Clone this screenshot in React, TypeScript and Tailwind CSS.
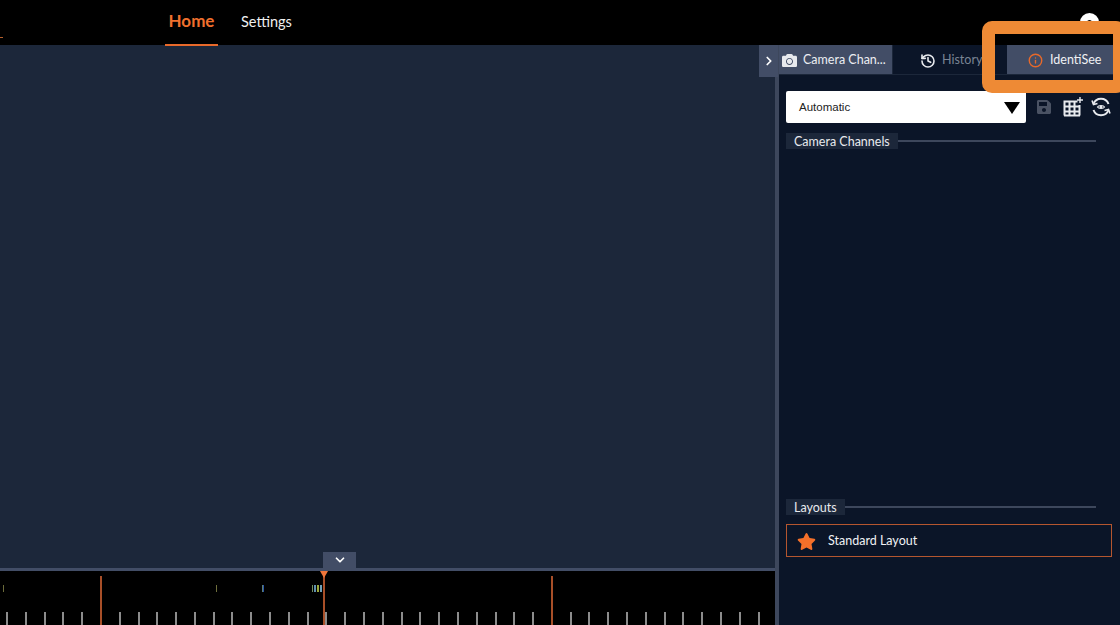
import { ChevronDown, ChevronRight, History, Info } from "lucide-react";
import { FaCamera, FaSave, FaStar } from "react-icons/fa";

const ticks = Array.from({ length: 41 }, (_, i) => 6 + i * 18.79);

const marks = [
  { x: 3, w: 1, color: "#6b6b3a" },
  { x: 216, w: 1, color: "#6f6f3c" },
  { x: 262, w: 1, color: "#5f7f6f" },
  { x: 263, w: 1, color: "#2a55a8" },
  { x: 312, w: 1, color: "#6f8f5f" },
  { x: 314, w: 2, color: "#5f8fb0" },
  { x: 317, w: 2, color: "#9aa83c" },
  { x: 320, w: 2, color: "#6fa0b8" },
];

function SectionTitle({ title, width }: { title: string; width: string }) {
  return (
    <div className="flex items-center pr-[24px]">
      <div className={`${width} h-[16px] bg-[#1c273a] pl-[8px] text-[12.5px] leading-[18px] text-[#e8eaee] whitespace-nowrap`}>{title}</div>
      <div className="h-[2px] flex-1 bg-[#3d475c]" />
    </div>
  );
}

function Timeline() {
  return (
    <div className="relative h-[54px] overflow-hidden bg-black">
      {marks.map((m) => (
        <div key={m.x} className="absolute top-[14px] h-[7px]" style={{ left: m.x, width: m.w, backgroundColor: m.color }} />
      ))}
      {ticks.map((x, i) =>
        i === 5 || i === 29 ? (
          <div key={x} className="absolute top-[5px] bottom-0 w-[2px] bg-[#a84f28]" style={{ left: x }} />
        ) : (
          <div key={x} className="absolute top-[41px] bottom-0 w-[2px] bg-[#8c8c8c]" style={{ left: x }} />
        ),
      )}
      <div className="absolute left-[323px] top-0 bottom-0 w-[2px] bg-[#a84f28]" />
      <div className="absolute left-[320px] top-0 h-0 w-0 border-x-[4px] border-t-[7px] border-x-transparent border-t-[#f0763a]" />
    </div>
  );
}

export default function App() {
  return (
    <div className="relative h-[625px] w-[1120px] overflow-hidden bg-black font-['Lato',sans-serif] text-white">
      <header className="relative flex h-[45px] bg-black pl-[165px]">
        <div className="absolute left-0 top-[37px] h-[1px] w-[3px] bg-[#b5602c]" />
        <div className="flex h-[46px] w-[53px] items-center justify-center border-b-[2px] border-[#e8692a] pb-[3px] text-[17px] font-bold text-[#f0702e]">Home</div>
        <div className="ml-[23px] flex h-[44px] items-center pb-[1px] text-[14.5px] text-[#f0f0f0]">Settings</div>
        <div className="absolute left-[1080px] top-[13px] h-[9px] w-[19px] overflow-hidden">
          <div className="h-[19px] w-[19px] rounded-full border-[7px] border-white" />
        </div>
      </header>

      <div className="flex h-[580px]">
        <div className="flex w-[775px] flex-col bg-[#1c273a]">
          <div className="relative flex-1">
            <div className="absolute right-[-3px] top-0 z-10 flex h-[32px] w-[19px] items-center justify-center bg-[#424d66] pl-[1px]">
              <ChevronRight size={14} strokeWidth={3} className="text-white" />
            </div>
            <div className="absolute bottom-0 left-[323px] flex h-[16px] w-[33px] items-center justify-center bg-[#424d66]">
              <ChevronDown size={14} strokeWidth={3} className="text-white" />
            </div>
          </div>
          <div className="h-[3px] bg-[#424d66]" />
          <Timeline />
        </div>

        <div className="w-[4px] bg-[#3d475c]" />

        <aside className="flex flex-1 flex-col bg-[#0b1528]">
          <div className="flex h-[30px] items-stretch border-b border-[#1c273a] bg-[#0b1528] pt-[0px] text-[12.5px] whitespace-nowrap">
            <div className="flex w-[114px] items-center border-r border-[#1c273a] bg-[#424d66] pl-[3px] pt-[1px]">
              <FaCamera size={15} className="text-[#e8eaee]" />
              <span className="ml-[6px] text-[#eceef2]">Camera Chan...</span>
            </div>
            <div className="flex w-[114px] items-center bg-[#0b1528] pl-[27px] pt-[2px]">
              <History size={16} strokeWidth={2.4} className="text-[#e8eaee]" />
              <span className="ml-[6px] text-[#7a8494]">History</span>
            </div>
            <div className="flex flex-1 items-center bg-[#424d66] pl-[21px] pt-[2px]">
              <Info size={15} strokeWidth={2.2} className="text-[#e8692a]" />
              <span className="ml-[7px] text-[#f0f1f4]">IdentiSee</span>
            </div>
          </div>

          <div className="mt-[16px] flex items-center pl-[7px]">
            <div className="flex h-[32px] w-[240px] items-center justify-between rounded-[2px] bg-white pl-[13px] pr-[6px] pt-[1px] font-['Liberation_Sans',sans-serif] text-[11.5px] text-[#222]">
              Automatic
              <div className="h-0 w-0 border-x-[8px] border-t-[12px] border-x-transparent border-t-black" />
            </div>
            <FaSave size={16} className="ml-[10px] text-[#4a5263]" />
            <svg width="20" height="20" viewBox="0 0 20 20" className="ml-[11px]" fill="none" stroke="#e8eaee">
              <path d="M1.5 4.5h13M1.5 9.5h15M1.5 14.5h15M1.5 18.5V3.5M6.5 18.5V3.5M11.5 18.5V3.5M16.5 18.5V8M1 18.5h16" strokeWidth="2" />
              <path d="M17 0v6M14 3h6" strokeWidth="1.4" />
            </svg>
            <svg width="20" height="20" viewBox="0 0 20 20" className="ml-[8px]" fill="none" stroke="#e8eaee" strokeWidth="2">
              <path d="M2.5 7A8 8 0 0 1 17.5 7" />
              <path d="M17.5 13A8 8 0 0 1 2.5 13" />
              <path d="M1 3.5 2.5 7.5 6.5 6.5M19 16.5 17.5 12.5 13.5 13.5" strokeWidth="1.6" />
              <circle cx="10" cy="10" r="1.6" fill="#e8eaee" stroke="none" />
              <path d="M6.5 10c1-2 6-2 7 0-1 2-6 2-7 0Z" strokeWidth="1.2" />
            </svg>
          </div>

          <div className="mt-[10px] pl-[7px]">
            <SectionTitle title="Camera Channels" width="w-[112px]" />
          </div>

          <div className="flex-1" />

          <div className="pl-[7px]">
            <SectionTitle title="Layouts" width="w-[59px]" />
          </div>
          <div className="mx-[7px] mb-[68px] mt-[9px] flex h-[33px] w-[326px] items-center border border-[#b5562f] pl-[10px] pt-[1px] text-[12.5px] text-[#f0f1f4]">
            <FaStar size={19} className="text-[#f5702a]" />
            <span className="ml-[12px]">Standard Layout</span>
          </div>
        </aside>
      </div>

      <div className="absolute left-[982px] top-[21px] h-[72px] w-[144px] rounded-[10px] border-[13px] border-[#ee8a35]" />
    </div>
  );
}
